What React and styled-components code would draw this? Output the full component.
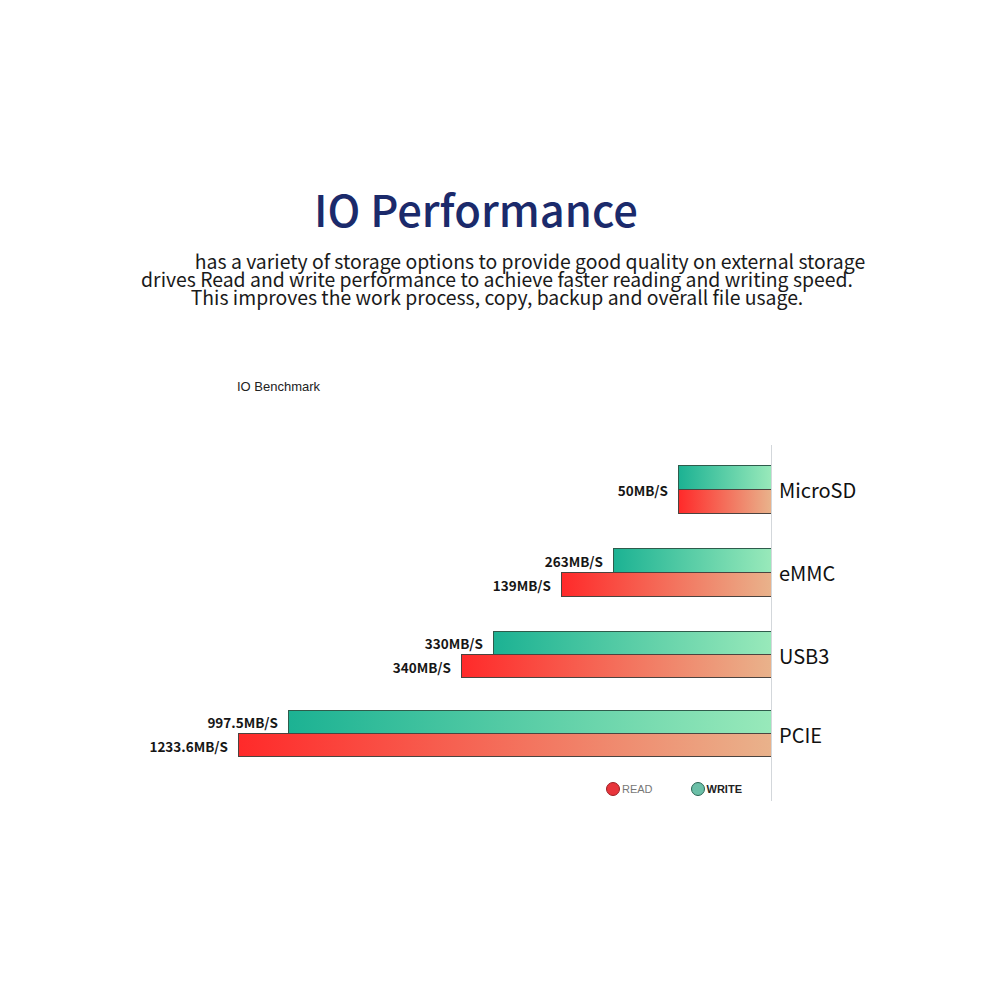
import React from 'react';
import styled, { createGlobalStyle } from 'styled-components';

const GlobalStyle = createGlobalStyle`
  body {
    margin: 0;
    background: #fff;
  }
`;

const Page = styled.div`
  width: 990px;
  height: 990px;
  box-sizing: border-box;
  padding-top: 184px;
  background: #fff;
  font-family: "Noto Sans CJK SC", "Noto Sans", sans-serif;
  overflow: hidden;
`;

const Title = styled.h1`
  margin: 0;
  padding-right: 38px;
  text-align: center;
  font-size: 43.5px;
  line-height: 50px;
  font-weight: 500;
  color: #1b2a6b;
`;

const Intro = styled.p`
  margin: 18px 0 0;
  padding-left: 4px;
  text-align: center;
  text-indent: 66px;
  font-size: 19.4px;
  line-height: 18px;
  color: #1a1a1a;
`;

const ChartCaption = styled.div`
  margin: 73px 0 0 237px;
  font-family: "Liberation Sans", Arial, sans-serif;
  font-size: 13px;
  line-height: 16px;
  color: #222;
`;

const Chart = styled.div`
  margin: 50px 0 0 130px;
  display: flex;
  flex-direction: column;
`;

const Row = styled.div`
  display: flex;
`;

const Axis = styled.div`
  width: 641px;
  padding-bottom: ${p => p.$space || 0}px;
  border-right: 1px solid #d3d7db;
  display: flex;
  flex-direction: column;
  align-items: flex-end;
`;

const BarLine = styled.div`
  display: flex;
  align-items: center;
  justify-content: flex-end;
  gap: 10px;
`;

const Stack = styled.div`
  display: flex;
  flex-direction: column;
  align-items: flex-end;
`;

const Bar = styled.div`
  height: ${p => p.$h || 25}px;
  box-sizing: border-box;
  border: 1px solid ${p => (p.$kind === 'read' ? '#4b4440' : '#2f5b4b')};
  border-right: none;
  margin-top: ${p => (p.$kind === 'read' ? '-1px' : '0')};
  background: ${p =>
    p.$kind === 'read'
      ? 'linear-gradient(to right, #ff2a2a, #e9b28b)'
      : 'linear-gradient(to right, #1cb293, #98e9ba)'};
`;

const Value = styled.span`
  font-size: 13.5px;
  font-weight: 700;
  color: #161616;
  white-space: nowrap;
`;

const Name = styled.div`
  height: 49px;
  display: flex;
  align-items: center;
  padding-left: 7px;
  font-size: 20px;
  color: #111;
`;

const Legend = styled.div`
  display: flex;
  align-items: center;
  gap: 38px;
  margin-top: 23px;
  padding-right: 29px;
`;

const LegendItem = styled.div`
  display: flex;
  align-items: center;
  gap: 2px;
  font-family: "Liberation Sans", Arial, sans-serif;
  font-size: 11px;
  font-weight: ${p => (p.$strong ? 700 : 400)};
  color: ${p => (p.$strong ? '#222' : '#777')};
`;

const Dot = styled.span`
  width: 14px;
  height: 14px;
  box-sizing: border-box;
  border-radius: 50%;
  background: ${p => p.$color};
  border: 1px solid ${p => p.$edge};
`;

const groups = [
  { name: 'MicroSD', space: 34, label: '50MB/S', write: { w: 93 }, read: { w: 93 } },
  { name: 'eMMC', space: 34, write: { w: 158, v: '263MB/S' }, read: { w: 210, v: '139MB/S' } },
  { name: 'USB3', space: 32, h: 24, write: { w: 278, v: '330MB/S' }, read: { w: 310, v: '340MB/S' } },
  { name: 'PCIE', space: 0, h: 24, write: { w: 483, v: '997.5MB/S' }, read: { w: 533, v: '1233.6MB/S' } },
];

const Group = ({ g }) => {
  const bars = g.label ? (
    <BarLine>
      <Value>{g.label}</Value>
      <Stack>
        <Bar $kind="write" $h={g.h} style={{ width: g.write.w }} />
        <Bar $kind="read" $h={g.h} style={{ width: g.read.w }} />
      </Stack>
    </BarLine>
  ) : (
    <>
      <BarLine>
        <Value>{g.write.v}</Value>
        <Bar $kind="write" $h={g.h} style={{ width: g.write.w }} />
      </BarLine>
      <BarLine>
        <Value>{g.read.v}</Value>
        <Bar $kind="read" $h={g.h} style={{ width: g.read.w }} />
      </BarLine>
    </>
  );
  return (
    <Row>
      <Axis $space={g.space}>{bars}</Axis>
      <Name>{g.name}</Name>
    </Row>
  );
};

export default function App() {
  return (
    <Page>
      <GlobalStyle />
      <Title>IO Performance</Title>
      <Intro>
        has a variety of storage options to provide good quality on external storage
        <br />
        drives Read and write performance to achieve faster reading and writing speed.
        <br />
        This improves the work process, copy, backup and overall file usage.
      </Intro>
      <ChartCaption>IO Benchmark</ChartCaption>
      <Chart>
        <Row>
          <Axis $space={20} />
        </Row>
        {groups.map(g => (
          <Group key={g.name} g={g} />
        ))}
        <Row>
          <Axis $space={5}>
            <Legend>
              <LegendItem>
                <Dot $color="#e8343b" $edge="#9c1f24" />
                READ
              </LegendItem>
              <LegendItem $strong>
                <Dot $color="#6bbfa7" $edge="#2b6655" />
                WRITE
              </LegendItem>
            </Legend>
          </Axis>
        </Row>
      </Chart>
    </Page>
  );
}
